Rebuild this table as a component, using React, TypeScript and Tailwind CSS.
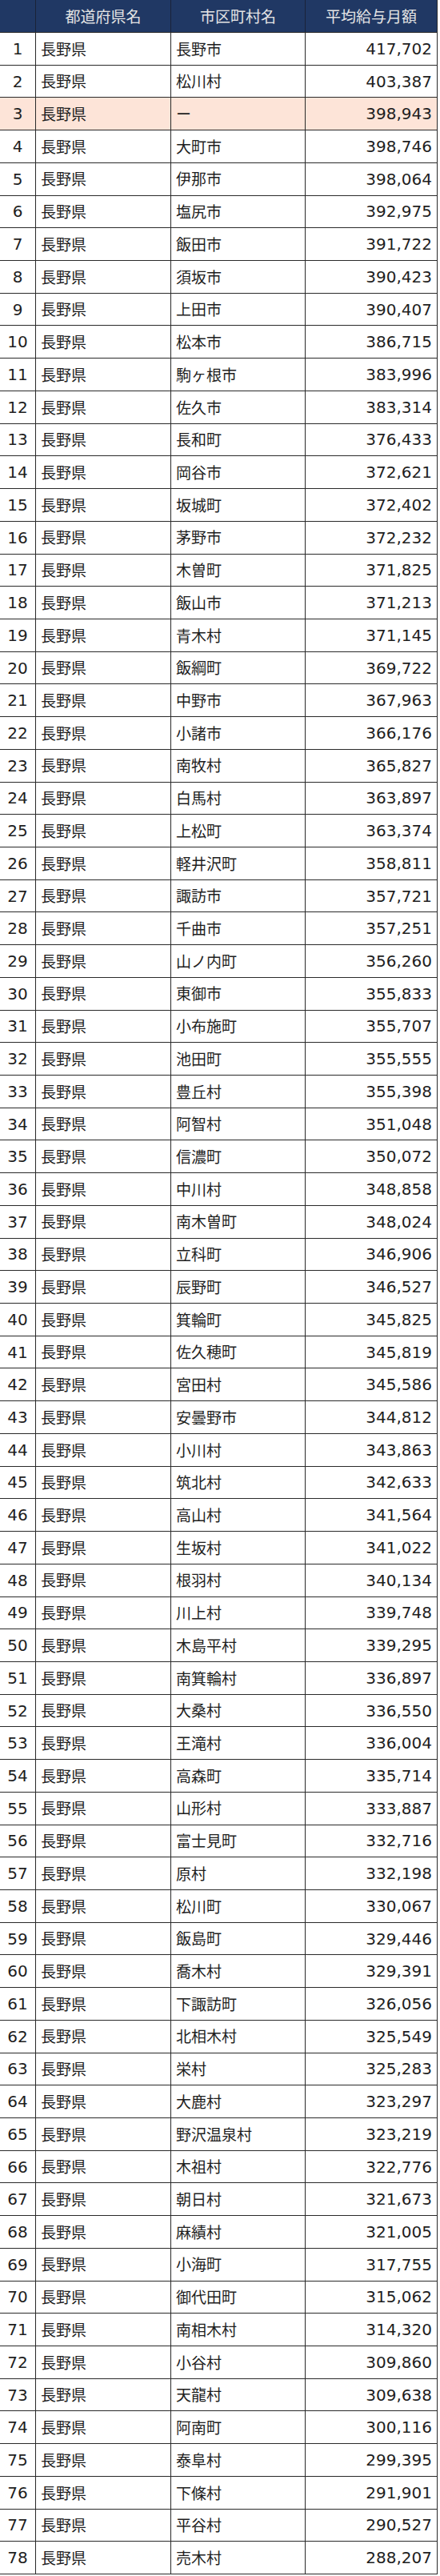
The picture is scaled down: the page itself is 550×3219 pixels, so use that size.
const rows: [string, string][] = [
  ['長野市', '417,702'],
  ['松川村', '403,387'],
  ['ー', '398,943'],
  ['大町市', '398,746'],
  ['伊那市', '398,064'],
  ['塩尻市', '392,975'],
  ['飯田市', '391,722'],
  ['須坂市', '390,423'],
  ['上田市', '390,407'],
  ['松本市', '386,715'],
  ['駒ヶ根市', '383,996'],
  ['佐久市', '383,314'],
  ['長和町', '376,433'],
  ['岡谷市', '372,621'],
  ['坂城町', '372,402'],
  ['茅野市', '372,232'],
  ['木曽町', '371,825'],
  ['飯山市', '371,213'],
  ['青木村', '371,145'],
  ['飯綱町', '369,722'],
  ['中野市', '367,963'],
  ['小諸市', '366,176'],
  ['南牧村', '365,827'],
  ['白馬村', '363,897'],
  ['上松町', '363,374'],
  ['軽井沢町', '358,811'],
  ['諏訪市', '357,721'],
  ['千曲市', '357,251'],
  ['山ノ内町', '356,260'],
  ['東御市', '355,833'],
  ['小布施町', '355,707'],
  ['池田町', '355,555'],
  ['豊丘村', '355,398'],
  ['阿智村', '351,048'],
  ['信濃町', '350,072'],
  ['中川村', '348,858'],
  ['南木曽町', '348,024'],
  ['立科町', '346,906'],
  ['辰野町', '346,527'],
  ['箕輪町', '345,825'],
  ['佐久穂町', '345,819'],
  ['宮田村', '345,586'],
  ['安曇野市', '344,812'],
  ['小川村', '343,863'],
  ['筑北村', '342,633'],
  ['高山村', '341,564'],
  ['生坂村', '341,022'],
  ['根羽村', '340,134'],
  ['川上村', '339,748'],
  ['木島平村', '339,295'],
  ['南箕輪村', '336,897'],
  ['大桑村', '336,550'],
  ['王滝村', '336,004'],
  ['高森町', '335,714'],
  ['山形村', '333,887'],
  ['富士見町', '332,716'],
  ['原村', '332,198'],
  ['松川町', '330,067'],
  ['飯島町', '329,446'],
  ['喬木村', '329,391'],
  ['下諏訪町', '326,056'],
  ['北相木村', '325,549'],
  ['栄村', '325,283'],
  ['大鹿村', '323,297'],
  ['野沢温泉村', '323,219'],
  ['木祖村', '322,776'],
  ['朝日村', '321,673'],
  ['麻績村', '321,005'],
  ['小海町', '317,755'],
  ['御代田町', '315,062'],
  ['南相木村', '314,320'],
  ['小谷村', '309,860'],
  ['天龍村', '309,638'],
  ['阿南町', '300,116'],
  ['泰阜村', '299,395'],
  ['下條村', '291,901'],
  ['平谷村', '290,527'],
  ['売木村', '288,207'],
];

export default function App() {
  return (
    <div className="w-[550px] bg-white font-['Noto_Sans_CJK_JP','Noto_Sans',sans-serif] text-[19px] text-[#1e1e1e]">
      <div className="w-[547px] border-r border-[#2a2a2a]">
        {/* header */}
        <div className="grid h-[41px] grid-cols-[45px_169px_168px_164px] bg-[#203864] text-[#e4e4e4] border-b border-[#2a2a2a]">
          <div className="border-r border-[#1a2338]" />
          <div className="flex items-center justify-center border-r border-[#1a2338]">都道府県名</div>
          <div className="flex items-center justify-center border-r border-[#1a2338]">市区町村名</div>
          <div className="flex items-center justify-center">平均給与月額</div>
        </div>

        {rows.map(([city, pay], i) => (
          <div
            key={i}
            className={`grid h-[40.73px] grid-cols-[45px_169px_168px_164px] border-b border-[#2a2a2a] ${
              i === 2 ? 'bg-[#fde4d8]' : 'bg-white'
            }`}
          >
            <div className="flex items-center justify-center border-r border-[#2a2a2a] font-['DejaVu_Sans',sans-serif] text-[20px]">
              {i + 1}
            </div>
            <div className="flex items-center border-r border-[#2a2a2a] pl-[6px]">長野県</div>
            <div className="flex items-center border-r border-[#2a2a2a] pl-[6px]">{city}</div>
            <div className="flex items-center justify-end pr-[6px] font-['DejaVu_Sans',sans-serif] text-[20px]">
              {pay}
            </div>
          </div>
        ))}
      </div>
    </div>
  );
}
